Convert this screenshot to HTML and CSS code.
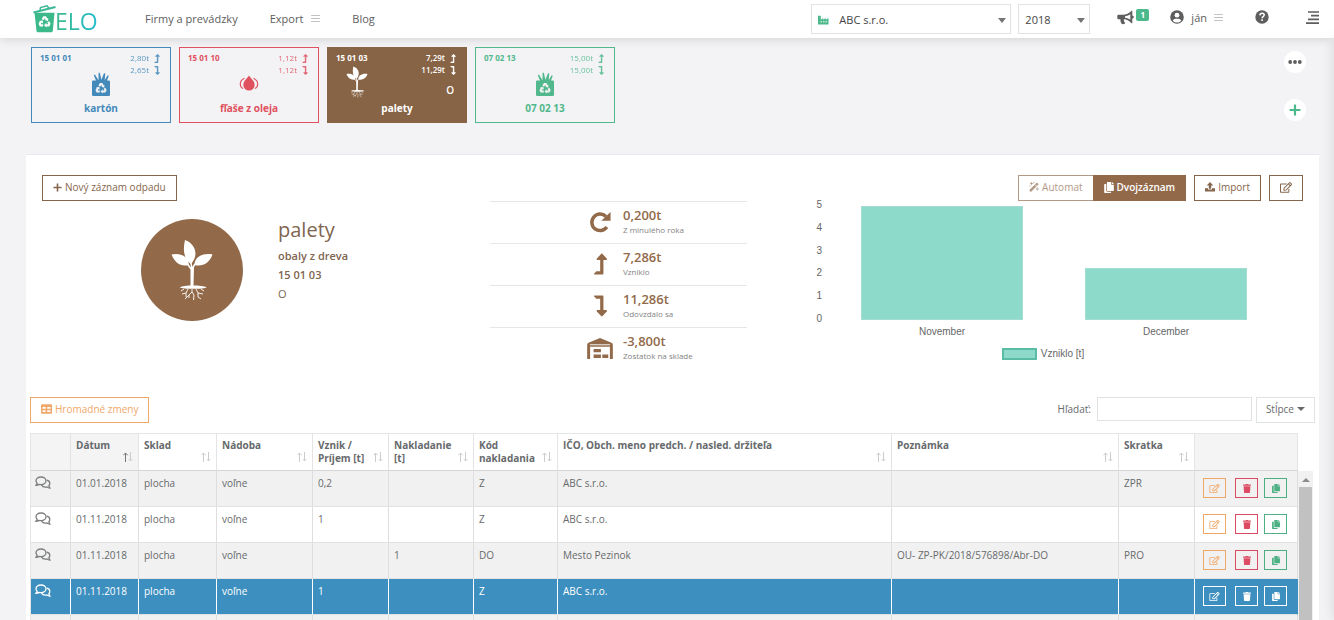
FILE: index.html
```html
<!DOCTYPE html>
<html lang="sk">
<head>
  <meta charset="UTF-8">
  <meta name="viewport" content="width=device-width, initial-scale=1.0">
  <title>ELO - palety</title>
  <link rel="stylesheet" href="styles.css">
</head>
<body>
  <!-- icons -->
  <svg class="sprite" aria-hidden="true">
    <symbol id="i-recycle" viewBox="0 0 24 24">
      <path d="M8.5 8.5L11 4.200h2.500l2.700 4.500M19 12.500l2 3.800-1.500 2.700h-5M9.500 19H4.600L3.200 16.300l2.600-4.600" fill="none" stroke="currentColor" stroke-width="4"/>
      <path d="M18.700 5.500v6.200l-6-2.400zM15.500 14.500v8.500l-4.500-4.200zM2 11.500l6.500-1.800 1.200 6z" fill="currentColor"/>
    </symbol>
    <symbol id="i-bag" viewBox="0 0 18 24">
      <path d="M1.200 8.500H4L1.800 3.200 2.900 2.600 6.500 8.300 6.600.8h1.200l1.600 7L12 1.200l1.300.3-.6 6.500 3-4.800 1.100.5-1.800 4.800h1.800q1.200 0 1.200 1.200v13a1.300 1.300 0 0 1-1.300 1.300H1.300A1.300 1.300 0 0 1 0 22.700v-13q0-1.200 1.200-1.200z" fill="currentColor"/>
    </symbol>
    <symbol id="i-drops" viewBox="0 0 20 18">
      <path d="M10 .5c1.500 3 6 5.500 6 10a6 6 0 0 1-12 0c0-4.500 4.500-7 6-10z" fill="currentColor"/>
      <path d="M5.200 3.500C3 4.500.8 6.500.8 9.500c0 2.300 1 4 3 4.800M14.800 3.500c2.200 1 4.400 3 4.400 6 0 2.300-1 4-3 4.800" fill="none" stroke="currentColor" stroke-width="1.200"/>
    </symbol>
    <symbol id="i-plant" viewBox="0 0 42 62">
      <path d="M20 25C12 20 12 9 14 1c9 3 15 14 6 24zM18 26C10 28 4 24 .5 15.500 9 13.500 17 17 18 26zM23.500 26c0-8 8-12.500 18-10.500-3 8.500-10 12.500-18 10.500z" fill="currentColor"/>
      <path d="M20 24l1 6 3-5M16.500 25l3.500 5" fill="none" stroke="currentColor" stroke-width="1.500"/>
      <path d="M19.500 28h3.500l-.5 18.500h1.500c6 .3 11 .8 11.500 2-2 1.800-24 1.800-26.500 0 .5-1.200 5-1.700 10.500-2z" fill="currentColor"/>
      <path d="M21 50v3l2 3-.5 5M21 53l-3 3v3M17 50l-2 4-4 1M15 54v4M25 50l2 4 5 1M27 54v4l3 2M13 50l-3 2M30 50l3 2M18 56l-4 4" fill="none" stroke="currentColor" stroke-width=".9"/>
    </symbol>
    <symbol id="i-up" viewBox="0 0 320 512">
      <path d="M313.553 119.669L209.587 7.666c-9.485-10.214-25.676-10.229-35.174 0L70.438 119.669C56.232 134.969 67.062 160 88.025 160H152v272H68.024a11.996 11.996 0 0 0-8.485 3.515l-56 56C-4.021 499.074 1.333 512 12.024 512H208c13.255 0 24-10.745 24-24V160h63.966c20.878 0 31.851-24.969 17.587-40.331z" fill="currentColor"/>
    </symbol>
    <symbol id="i-down" viewBox="0 0 320 512">
      <path d="M313.553 392.331L209.587 504.334c-9.485 10.214-25.676 10.229-35.174 0L70.438 392.331C56.232 377.031 67.062 352 88.025 352H152V80H68.024a11.996 11.996 0 0 1-8.485-3.515l-56-56C-4.021 12.926 1.333 0 12.024 0H208c13.255 0 24 10.745 24 24v328h63.966c20.878 0 31.851 24.969 17.587 40.331z" fill="currentColor"/>
    </symbol>
    <symbol id="i-redo" viewBox="0 0 24 24">
      <path d="M19.500 17.500A9 9 0 1 1 18.500 6" fill="none" stroke="currentColor" stroke-width="3.800"/>
      <path d="M23.500 1v9.500H13.500z" fill="currentColor"/>
    </symbol>
    <symbol id="i-warehouse" viewBox="0 0 28 24">
      <path d="M0 24V8.500Q0 7 1.500 6.300L14 1l12.500 5.300Q28 7 28 8.500V24h-3.200V10.500H3.200V24zM7 13h8v3.500H7zM7 19h8v4H7zM16.500 19H23v4h-6.500z" fill="currentColor"/>
      <path d="M3 8.500h22" stroke="#fff" stroke-width="1"/>
    </symbol>
    <symbol id="i-trash" viewBox="0 0 448 512">
      <path d="M432 32H312l-9.400-18.700A24 24 0 0 0 281.100 0H166.800a23.720 23.720 0 0 0-21.400 13.300L136 32H16A16 16 0 0 0 0 48v32a16 16 0 0 0 16 16h416a16 16 0 0 0 16-16V48a16 16 0 0 0-16-16zM53.200 467a48 48 0 0 0 47.900 45h245.800a48 48 0 0 0 47.900-45L416 128H32z" fill="currentColor"/>
    </symbol>
    <symbol id="i-copy" viewBox="0 0 448 512">
      <path d="M320 448v40c0 13.255-10.745 24-24 24H24c-13.255 0-24-10.745-24-24V120c0-13.255 10.745-24 24-24h72v296c0 30.879 25.121 56 56 56h168zm0-344V0H152c-13.255 0-24 10.745-24 24v368c0 13.255 10.745 24 24 24h272c13.255 0 24-10.745 24-24V128H344c-13.200 0-24-10.800-24-24zm120.971-31.029L375.029 7.029A24 24 0 0 0 358.059 0H352v96h96v-6.059a24 24 0 0 0-7.029-16.970z" fill="currentColor"/>
    </symbol>
    <symbol id="i-edit" viewBox="0 0 576 512">
      <path d="M402.300 344.900l32-32c5-5 13.700-1.500 13.700 5.700V464c0 26.500-21.500 48-48 48H48c-26.500 0-48-21.500-48-48V112c0-26.500 21.500-48 48-48h273.500c7.100 0 10.700 8.600 5.700 13.700l-32 32c-1.500 1.500-3.500 2.300-5.700 2.300H48v352h352V350.500c0-2.100.8-4.100 2.300-5.600zm156.600-201.800L296.300 405.700l-90.400 10c-26.200 2.900-48.500-19.200-45.600-45.600l10-90.400L432.900 17.100c22.900-22.900 59.900-22.900 82.700 0l43.200 43.200c22.900 22.900 22.900 60 .1 82.800zM460.100 174L402 115.900 216.200 301.800l-7.300 65.300 65.300-7.300L460.100 174zm64.800-79.700l-43.200-43.200c-4.100-4.100-10.800-4.100-14.800 0L436 82l58.100 58.100 30.900-30.900c4-4.200 4-10.800-.1-14.900z" fill="currentColor"/>
    </symbol>
    <symbol id="i-comments" viewBox="0 0 16 14">
      <path d="M6 1C3.200 1 1 2.600 1 4.800c0 1 .4 1.800 1.100 2.500L1 9.300c1.400 0 2.300-.4 3-.9.600.2 1.300.2 2 .2 2.800 0 5-1.600 5-3.800S8.800 1 6 1z" fill="none" stroke="currentColor" stroke-width="1.300"/>
      <path d="M11.800 4.200c1.800.4 3 1.600 3 3.200 0 .9-.4 1.700-1 2.300l1.100 2.300c-1.400 0-2.400-.5-3-1-2.300.5-4.400-.2-5.300-1.900" fill="none" stroke="currentColor" stroke-width="1.300"/>
    </symbol>
    <symbol id="i-sort" viewBox="0 0 10 10">
      <path d="M2.500 10V1M.3 3.300L2.500 1l2.200 2.300" fill="none" stroke="currentColor"/>
      <path d="M7.500 0v9M5.800 7.200L7.500 9l1.700-1.800" fill="none" stroke="#ccc"/>
    </symbol>
    <symbol id="i-bars" viewBox="0 0 10 8">
      <path d="M0 .5h10M0 4h10M0 7.500h10" stroke="currentColor" stroke-width="1"/>
    </symbol>
    <symbol id="i-plus" viewBox="0 0 10 10">
      <path d="M5 .5v9M.5 5h9" stroke="currentColor" stroke-width="1.800"/>
    </symbol>
  </svg>

  <header class="topbar">
    <a class="logo" href="#">
      <svg width="24" height="28" viewBox="0 0 24 28">
        <path d="M.5 7.500L22.500 2" stroke="#3cb795" stroke-width="2"/>
        <path d="M7 5.500L7.500 2.500l6.500-1.700 2 2.500" fill="none" stroke="#3cb795" stroke-width="1.500"/>
        <path d="M1.500 7.800h20l-1.700 18.200a1.500 1.500 0 0 1-1.500 1.300H5a1.500 1.500 0 0 1-1.500-1.300z" fill="#3cb98a"/>
        <use href="#i-recycle" x="5" y="10" width="13" height="13" color="#fff"/>
      </svg>
      <span>ELO</span>
    </a>
    <nav class="nav">
      <a href="#">Firmy a prevádzky</a>
      <a href="#">Export <svg class="bars" width="9" height="7"><use href="#i-bars"/></svg></a>
      <a href="#">Blog</a>
    </nav>
    <div class="select-wrap company">
      <svg class="factory" width="11" height="10" viewBox="0 0 11 10"><path d="M0 9.500V.8h2.800v4L5.200 3v1.800L7.800 3v1.800L10.500 3v6.500z" fill="#4cb98d"/><path d="M2.500 6.800h6.500" stroke="#fff" stroke-width="1" stroke-dasharray="1.500 1"/></svg>
      <select aria-label="Firma"><option>ABC s.r.o.</option></select>
    </div>
    <div class="select-wrap year">
      <select aria-label="Rok"><option>2018</option></select>
    </div>
    <div class="topbar-icons">
      <a class="news" href="#" aria-label="Novinky">
        <svg width="17" height="15" viewBox="0 0 17 15"><path d="M1.500 4.800H6C9 4.800 12 3.500 14.500.8h.8v4.700a1.500 1.500 0 0 1 0 3v4.700h-.8C12 10.700 9.500 9.500 7 9.300c-.4 1.700.2 2.700 1.200 3.700-.3 1.300-3 1.500-3.800.5C3.600 12 3.200 10.700 3.500 9.300h-2Q.3 9.300.3 8V6q0-1.200 1.200-1.200z" fill="currentColor"/><path d="M8 6.300c2.200-.3 3.800-1 5.300-2.100v5.600C11.800 8.800 10.200 8.100 8 7.800z" fill="#fff"/></svg>
        <span class="badge">1</span>
      </a>
      <a class="user" href="#">
        <svg width="14" height="14" viewBox="0 0 14 14"><circle cx="7" cy="7" r="6.800" fill="currentColor"/><circle cx="7" cy="5.200" r="2.400" fill="#fff"/><path d="M2.700 10.700C3.500 9 5 8.800 7 8.800s3.500.2 4.300 1.900a5.800 5.800 0 0 1-8.600 0z" fill="#fff"/></svg>
        <span>ján</span>
        <svg class="bars" width="9" height="7"><use href="#i-bars"/></svg>
      </a>
      <a class="help" href="#" aria-label="Pomoc">
        <svg width="14" height="14" viewBox="0 0 14 14"><circle cx="7" cy="7" r="6.700" fill="currentColor"/><path d="M4.900 5.400C5 4 6 3.300 7.100 3.300c1.200 0 2.100.8 2.100 1.800 0 1.500-2.100 1.500-2.100 3.200M7.100 9.300v1.700" fill="none" stroke="#fff" stroke-width="1.500"/></svg>
      </a>
      <a class="side-toggle" href="#" aria-label="Menu">
        <svg width="13" height="13" viewBox="0 0 13 13"><path d="M2 1h11M5 4.700h8M2 8.400h11M0 12.100h13" stroke="currentColor" stroke-width="1.700"/></svg>
      </a>
    </div>
  </header>

  <main>
    <section class="waste-bar">
      <div class="card blue">
        <div class="card-top">
          <div class="card-code">15 01 01</div>
          <svg class="card-icon" width="18" height="24"><use href="#i-bag"/><use href="#i-recycle" x="3" y="10" width="12" height="12" color="#f3f3f4"/></svg>
          <div class="amounts">
            <div>2,80t <svg width="6" height="9"><use href="#i-up"/></svg></div>
            <div>2,65t <svg width="6" height="9"><use href="#i-down"/></svg></div>
          </div>
        </div>
        <div class="card-name">kartón</div>
      </div>
      <div class="card red">
        <div class="card-top">
          <div class="card-code">15 01 10</div>
          <svg class="card-icon drops" width="20" height="17"><use href="#i-drops"/></svg>
          <div class="amounts">
            <div>1,12t <svg width="6" height="9"><use href="#i-up"/></svg></div>
            <div>1,12t <svg width="6" height="9"><use href="#i-down"/></svg></div>
          </div>
        </div>
        <div class="card-name">fľaše z oleja</div>
      </div>
      <div class="card active">
        <div class="card-top">
          <div class="card-code">
            15 01 03
            <svg class="plant" width="22" height="32"><use href="#i-plant"/></svg>
          </div>
          <div class="amounts">
            <div>7,29t <svg width="6" height="9"><use href="#i-up"/></svg></div>
            <div>11,29t <svg width="6" height="9"><use href="#i-down"/></svg></div>
            <div class="category">O</div>
          </div>
        </div>
        <div class="card-name">palety</div>
      </div>
      <div class="card green">
        <div class="card-top">
          <div class="card-code">07 02 13</div>
          <svg class="card-icon" width="18" height="24"><use href="#i-bag"/><use href="#i-recycle" x="3" y="10" width="12" height="12" color="#f3f3f4"/></svg>
          <div class="amounts">
            <div>15,00t <svg width="6" height="9"><use href="#i-up"/></svg></div>
            <div>15,00t <svg width="6" height="9"><use href="#i-down"/></svg></div>
          </div>
        </div>
        <div class="card-name">07 02 13</div>
      </div>
      <div class="round-buttons">
        <button type="button" aria-label="Viac"><svg width="14" height="4" viewBox="0 0 14 4"><circle cx="2.200" cy="2" r="1.900"/><circle cx="7" cy="2" r="1.900"/><circle cx="11.800" cy="2" r="1.900"/></svg></button>
        <button type="button" class="add" aria-label="Pridať"><svg width="12" height="12"><use href="#i-plus"/></svg></button>
      </div>
    </section>

    <section class="panel">
      <div class="toolbar">
        <button type="button" class="btn brown"><svg width="9" height="9"><use href="#i-plus"/></svg> Nový záznam odpadu</button>
        <div class="toolbar-right">
          <div class="btn-group">
            <button type="button" class="btn brown faded"><svg width="10" height="10" viewBox="0 0 10 10"><path d="M1 9.200L8.800 1.400" stroke="currentColor" stroke-width="2.400"/><path d="M6 2.600l1.600 1.600" stroke="#fff" stroke-width=".8"/><path d="M2.500 0v3M1 1.500h3M4.800 0v1.200M8.300 5.500v3M6.800 7h3M.3 3.800h1.200" stroke="currentColor" stroke-width=".8"/></svg> Automat</button>
            <button type="button" class="btn brown filled"><svg width="10" height="11"><use href="#i-copy"/></svg> Dvojzáznam</button>
          </div>
          <button type="button" class="btn brown"><svg width="10" height="10" viewBox="0 0 10 10"><path d="M5 0l3.300 3.600H6.200v3.100H3.800V3.600H1.700zM0 6.300h3v1.200h4V6.300h3V9.500H0z" fill="currentColor"/></svg> Import</button>
          <button type="button" class="btn brown" aria-label="Upraviť"><svg width="12" height="11"><use href="#i-edit"/></svg></button>
        </div>
      </div>

      <div class="summary">
        <div class="waste">
          <div class="waste-icon"><svg width="42" height="62"><use href="#i-plant"/></svg></div>
          <div class="waste-text">
            <h1>palety</h1>
            <p>obaly z dreva</p>
            <p>15 01 03</p>
            <p class="light">O</p>
          </div>
        </div>

        <ul class="stats">
          <li>
            <svg width="22" height="22"><use href="#i-redo"/></svg>
            <div><strong>0,200t</strong><small>Z minulého roka</small></div>
          </li>
          <li>
            <svg width="13" height="22"><use href="#i-up"/></svg>
            <div><strong>7,286t</strong><small>Vzniklo</small></div>
          </li>
          <li>
            <svg width="13" height="22"><use href="#i-down"/></svg>
            <div><strong>11,286t</strong><small>Odovzdalo sa</small></div>
          </li>
          <li>
            <svg width="26" height="22"><use href="#i-warehouse"/></svg>
            <div><strong>-3,800t</strong><small>Zostatok na sklade</small></div>
          </li>
        </ul>

        <div class="chart">
          <div class="chart-body">
            <div class="axis"><span>5</span><span>4</span><span>3</span><span>2</span><span>1</span><span>0</span></div>
            <div class="bars-area">
              <div class="bar" style="height: 100%"></div>
              <div class="bar" style="height: 46%"></div>
            </div>
          </div>
          <div class="months"><span>November</span><span>December</span></div>
          <div class="legend"><i></i>Vzniklo [t]</div>
        </div>
      </div>

      <div class="records">
        <div class="records-bar">
          <button type="button" class="btn orange"><svg width="11" height="10" viewBox="0 0 11 10"><path d="M1 .3h9a1 1 0 0 1 1 1v7.400a1 1 0 0 1-1 1H1a1 1 0 0 1-1-1V1.300a1 1 0 0 1 1-1zM1.500 3v1.700h3.200V3zm4.700 0v1.700h3.300V3zM1.500 6.200v1.900h3.200V6.200zm4.700 0v1.900h3.300V6.200z" fill="currentColor" fill-rule="evenodd"/></svg> Hromadné zmeny</button>
          <label class="search-label" for="search">Hľadať:</label>
          <input type="search" id="search">
          <button type="button" class="btn columns">Stĺpce <span class="caret"></span></button>
        </div>

        <div class="table-wrap">
          <table>
            <colgroup>
              <col class="c-chat"><col class="c-date"><col class="c-store"><col class="c-bin"><col class="c-in"><col class="c-out"><col class="c-code"><col><col class="c-note"><col class="c-short"><col class="c-actions">
            </colgroup>
            <thead>
              <tr>
                <th class="gray"></th>
                <th class="gray sorted"><div>Dátum <svg width="10" height="10"><use href="#i-sort"/></svg></div></th>
                <th><div>Sklad <svg width="10" height="10"><use href="#i-sort"/></svg></div></th>
                <th><div>Nádoba <svg width="10" height="10"><use href="#i-sort"/></svg></div></th>
                <th><div>Vznik / Príjem [t] <svg width="10" height="10"><use href="#i-sort"/></svg></div></th>
                <th><div>Nakladanie [t] <svg width="10" height="10"><use href="#i-sort"/></svg></div></th>
                <th><div>Kód nakladania <svg width="10" height="10"><use href="#i-sort"/></svg></div></th>
                <th><div>IČO, Obch. meno predch. / nasled. držiteľa <svg width="10" height="10"><use href="#i-sort"/></svg></div></th>
                <th><div>Poznámka <svg width="10" height="10"><use href="#i-sort"/></svg></div></th>
                <th><div>Skratka <svg width="10" height="10"><use href="#i-sort"/></svg></div></th>
                <th class="gray"></th>
              </tr>
            </thead>
            <tbody>
              <tr>
                <td class="chat"><svg width="16" height="14"><use href="#i-comments"/></svg></td>
                <td>01.01.2018</td><td>plocha</td><td>voľne</td><td>0,2</td><td></td><td>Z</td><td>ABC s.r.o.</td><td></td><td>ZPR</td>
                <td class="actions"><div>
                  <button type="button" class="edit" aria-label="Upraviť"><svg width="11" height="9"><use href="#i-edit"/></svg></button>
                  <button type="button" class="delete" aria-label="Zmazať"><svg width="8" height="9"><use href="#i-trash"/></svg></button>
                  <button type="button" class="copy" aria-label="Kopírovať"><svg width="8" height="9"><use href="#i-copy"/></svg></button>
                </div></td>
              </tr>
              <tr>
                <td class="chat"><svg width="16" height="14"><use href="#i-comments"/></svg></td>
                <td>01.11.2018</td><td>plocha</td><td>voľne</td><td>1</td><td></td><td>Z</td><td>ABC s.r.o.</td><td></td><td></td>
                <td class="actions"><div>
                  <button type="button" class="edit" aria-label="Upraviť"><svg width="11" height="9"><use href="#i-edit"/></svg></button>
                  <button type="button" class="delete" aria-label="Zmazať"><svg width="8" height="9"><use href="#i-trash"/></svg></button>
                  <button type="button" class="copy" aria-label="Kopírovať"><svg width="8" height="9"><use href="#i-copy"/></svg></button>
                </div></td>
              </tr>
              <tr>
                <td class="chat"><svg width="16" height="14"><use href="#i-comments"/></svg></td>
                <td>01.11.2018</td><td>plocha</td><td>voľne</td><td></td><td>1</td><td>DO</td><td>Mesto Pezinok</td><td>OU- ZP-PK/2018/576898/Abr-DO</td><td>PRO</td>
                <td class="actions"><div>
                  <button type="button" class="edit" aria-label="Upraviť"><svg width="11" height="9"><use href="#i-edit"/></svg></button>
                  <button type="button" class="delete" aria-label="Zmazať"><svg width="8" height="9"><use href="#i-trash"/></svg></button>
                  <button type="button" class="copy" aria-label="Kopírovať"><svg width="8" height="9"><use href="#i-copy"/></svg></button>
                </div></td>
              </tr>
              <tr class="selected">
                <td class="chat"><svg width="16" height="14"><use href="#i-comments"/></svg></td>
                <td>01.11.2018</td><td>plocha</td><td>voľne</td><td>1</td><td></td><td>Z</td><td>ABC s.r.o.</td><td></td><td></td>
                <td class="actions"><div>
                  <button type="button" class="edit" aria-label="Upraviť"><svg width="11" height="9"><use href="#i-edit"/></svg></button>
                  <button type="button" class="delete" aria-label="Zmazať"><svg width="8" height="9"><use href="#i-trash"/></svg></button>
                  <button type="button" class="copy" aria-label="Kopírovať"><svg width="8" height="9"><use href="#i-copy"/></svg></button>
                </div></td>
              </tr>
              <tr><td></td><td></td><td></td><td></td><td></td><td></td><td></td><td></td><td></td><td></td><td></td></tr>
            </tbody>
          </table>
          <div class="scrollbar"><span class="scroll-up"></span><span class="thumb"></span></div>
        </div>
      </div>
    </section>
  </main>
  <aside class="right-sidebar"></aside>
</body>
</html>
```
FILE: styles.css
```css
* {
  box-sizing: border-box;
}
body {
  margin: 0;
  height: 100vh;
  overflow: hidden;
  display: flex;
  flex-direction: column;
  background: #f3f3f5;
  color: #676a6c;
  font-family: "Open Sans", sans-serif;
  font-size: 10px;
  line-height: 13px;
}
a {
  color: inherit;
  text-decoration: none;
}
svg {
  display: block;
  flex: none;
}
button,
input,
select {
  font-family: inherit;
  font-size: 10px;
  color: inherit;
}
button {
  cursor: pointer;
}
.sprite {
  position: absolute;
  width: 0;
  height: 0;
}

/* top bar */
.topbar {
  flex: none;
  display: flex;
  align-items: center;
  height: 38px;
  padding: 0 15px 0 33px;
  background: #fff;
  color: #5e5e5e;
  font-size: 11px;
  box-shadow: 0 0 12px rgba(0, 0, 0, 0.16);
}
.logo {
  display: flex;
  align-items: center;
  width: 112px;
}
.logo span {
  margin-left: -2px;
  font-size: 23px;
  line-height: 24px;
  padding-top: 4px;
  background: linear-gradient(90deg, #3cb98a, #25bcd0);
  -webkit-background-clip: text;
  background-clip: text;
  color: transparent;
}
.nav {
  display: flex;
  gap: 32px;
  margin-right: auto;
  padding-bottom: 2px;
  font-weight: 500;
}
.nav a {
  display: flex;
  align-items: center;
  gap: 8px;
}
.bars {
  color: #b5b5b5;
}
.select-wrap {
  position: relative;
  height: 30px;
  margin-right: 7px;
}
.select-wrap::after {
  content: "";
  position: absolute;
  right: 5px;
  top: 14px;
  border: 4px solid transparent;
  border-top: 5px solid #757575;
  border-bottom: 0;
  pointer-events: none;
}
.select-wrap select {
  width: 100%;
  height: 30px;
  padding: 0 6px;
  border: 1px solid #e0e3e4;
  border-radius: 0;
  background: #fff;
  color: #444;
  font-size: 11px;
  appearance: none;
}
.company {
  width: 200px;
}
.company select {
  padding-left: 27px;
}
.year {
  width: 72px;
}
.factory {
  position: absolute;
  left: 7px;
  top: 11px;
}
.topbar-icons {
  display: flex;
  align-items: center;
  padding: 0 0 4px 20px;
}
.news,
.user {
  display: flex;
  align-items: center;
}
.badge {
  margin: 0 0 5px 2px;
  width: 13px;
  border-radius: 2px;
  background: #4cb98d;
  color: #fff;
  font-size: 8px;
  font-weight: 700;
  line-height: 12px;
  text-align: center;
}
.user {
  gap: 7px;
  margin: 0 32px 0 21px;
}
.help {
  margin-right: 37px;
}

/* waste cards */
main {
  flex: 1;
  min-height: 0;
  display: flex;
  flex-direction: column;
  padding: 9px 15px 0 26px;
}
.waste-bar {
  display: flex;
  gap: 8px;
  padding: 0 13px 0 5px;
  margin-bottom: 31px;
}
.card {
  width: 140px;
  height: 76px;
  padding: 4px 8px;
  border: 1px solid currentColor;
  font-size: 8px;
}
.card.blue {
  color: #4389ba;
}
.card.red {
  color: #e0515f;
}
.card.green {
  color: #50b88c;
}
.card.active {
  background: #886446;
  border-color: #886446;
  color: #fff;
}
.card-top {
  display: grid;
  grid-template-columns: 1fr auto 1fr;
  height: 44px;
  margin-bottom: 5px;
  line-height: 12px;
}
.card.active .card-top {
  grid-template-columns: 1fr 1fr;
}
.card-code {
  font-weight: 700;
}
.card-icon {
  align-self: end;
}
.drops {
  margin-bottom: 4px;
}
.plant {
  margin: 2px 0 0 10px;
}
.amounts {
  justify-self: end;
}
.amounts div {
  display: flex;
  align-items: center;
  justify-content: flex-end;
  gap: 5px;
  padding-right: 2px;
  white-space: nowrap;
  opacity: 0.85;
}
.active .amounts div {
  font-weight: 600;
  opacity: 1;
}
.amounts .category {
  padding: 8px 4px 0 0;
  font-size: 10px;
}
.card-name {
  font-size: 10px;
  font-weight: 700;
  line-height: 14px;
  text-align: center;
}
.round-buttons {
  display: flex;
  flex-direction: column;
  gap: 26px;
  margin-left: auto;
  padding-top: 4px;
}
.round-buttons button {
  display: flex;
  align-items: center;
  justify-content: center;
  width: 22px;
  height: 22px;
  padding: 0;
  border: 0;
  border-radius: 50%;
  background: #fff;
  color: #5e5e5e;
  fill: currentColor;
}
.round-buttons .add {
  color: #4cb98d;
}

/* panel */
.panel {
  flex: 1;
  min-height: 0;
  overflow: hidden;
  padding-top: 20px;
  border-top: 1px solid #e7eaec;
  background: #fff;
}
.toolbar {
  display: flex;
  justify-content: space-between;
  padding: 0 16px;
}
.toolbar-right {
  display: flex;
  gap: 8px;
}
.btn-group {
  display: flex;
}
.btn {
  display: flex;
  align-items: center;
  gap: 3px;
  height: 26px;
  padding: 0 10px 2px;
  border: 1px solid currentColor;
  background: #fff;
}
.btn.brown {
  color: #85664d;
}
.btn.faded {
  color: #b39a86;
  border-right: 0;
}
.btn.filled {
  border-color: #926a4a;
  background: #926a4a;
  color: #fff;
  font-weight: 600;
}
.btn.orange {
  color: #f0a868;
  margin-right: auto;
}

.summary {
  display: grid;
  grid-template-columns: 448fr 257fr 556fr;
  padding: 0 16px;
  margin-bottom: 28px;
}
.waste {
  display: flex;
  align-items: flex-start;
  gap: 35px;
  padding: 15px 0 0 99px;
  color: #80654f;
}
.waste-icon {
  display: flex;
  align-items: center;
  justify-content: center;
  width: 102px;
  height: 102px;
  margin-top: 3px;
  border-radius: 50%;
  background: #926a4a;
  color: #fff;
}
.waste h1 {
  margin: 0 0 2px;
  font-size: 20px;
  font-weight: 400;
  line-height: 28px;
}
.waste p {
  margin: 0;
  font-size: 11px;
  font-weight: 600;
  line-height: 19px;
}
.waste .light {
  font-weight: 400;
}
.stats {
  list-style: none;
  margin: 0;
  padding: 0;
}
.stats li {
  display: grid;
  grid-template-columns: 28px auto;
  align-items: center;
  justify-items: center;
  justify-content: start;
  gap: 9px;
  padding: 5px 0 6px 96px;
  border-top: 1px solid #e7e7e7;
  color: #926a4a;
}
.stats li div {
  justify-self: start;
}
.stats strong {
  display: block;
  font-size: 13px;
  font-weight: 600;
  line-height: 16px;
}
.stats small {
  display: block;
  color: #838383;
  font-size: 8px;
  line-height: 14px;
}

/* chart */
.chart {
  padding: 5px 25px 0 61px;
  color: #666;
  font-family: "Liberation Sans", Arial, sans-serif;
  font-size: 10px;
  line-height: 12px;
}
.chart-body {
  display: flex;
  height: 114px;
}
.axis {
  display: flex;
  flex-direction: column;
  justify-content: space-between;
  width: 22px;
  margin: -6px 0 -4px;
  padding-right: 8px;
  line-height: 10px;
  text-align: right;
}
.bars-area {
  flex: 1;
  display: flex;
  align-items: flex-end;
  justify-content: space-around;
}
.bar {
  width: 36%;
  background: #8dd9ca;
  border: 1px solid #a3dcd0;
}
.months {
  display: flex;
  padding: 6px 0 0 22px;
}
.months span {
  flex: 1;
  text-align: center;
}
.legend {
  display: flex;
  justify-content: center;
  gap: 4px;
  margin-top: 10px;
}
.legend i {
  width: 35px;
  border: 2px solid #5bbca6;
  background: #8dd9ca;
}

/* records table */
.records {
  padding: 0 4px;
}
.records-bar {
  display: flex;
  align-items: flex-start;
  margin-bottom: 10px;
}
.search-label {
  margin-right: 6px;
  line-height: 25px;
}
#search {
  width: 155px;
  height: 24px;
  margin-right: 4px;
  padding: 0 6px;
  border: 1px solid #e0e3e4;
}
.btn.columns {
  padding: 0 9px 2px;
  border-color: #e0e3e4;
}
.caret {
  border: 4px solid transparent;
  border-top-color: currentColor;
  border-bottom: 0;
}
.table-wrap {
  display: flex;
}
table {
  flex: 1;
  width: 100%;
  table-layout: fixed;
  border-collapse: separate;
  border-spacing: 0;
  border-left: 1px solid #e4e4e4;
}
.c-chat { width: 40px; }
.c-date { width: 68px; }
.c-store { width: 78px; }
.c-bin { width: 96px; }
.c-in { width: 76px; }
.c-out { width: 85px; }
.c-code { width: 84px; }
.c-note { width: 227px; }
.c-short { width: 76px; }
.c-actions { width: 103px; }
th {
  height: 38px;
  padding: 5px;
  border-top: 1px solid #e4e7e8;
  border-right: 1px solid #e4e4e4;
  border-bottom: 1px solid #d5d5d5;
  text-align: left;
  vertical-align: top;
  font-weight: 700;
}
th div {
  display: flex;
  justify-content: space-between;
  height: 26px;
}
th svg {
  align-self: flex-end;
  margin-bottom: 3px;
  color: #ccc;
}
th.gray {
  background: #f4f4f5;
}
th.sorted svg {
  color: #777;
}
td {
  height: 36px;
  padding: 6px 5px;
  border-right: 1px solid #dedede;
  border-bottom: 1px solid #e2e2e2;
  vertical-align: top;
}
td.chat {
  padding: 5px 4px;
  color: #7b7d7f;
}
tbody tr:nth-child(odd) {
  background: #f1f1f1;
}
td.actions {
  padding: 7px 8px 0;
}
.actions div {
  display: flex;
}
.actions button {
  display: flex;
  align-items: center;
  justify-content: center;
  width: 23px;
  height: 20px;
  padding: 0;
  border: 1px solid currentColor;
  background: none;
}
.actions .edit {
  margin-right: 9px;
  color: #f0a868;
}
.actions .delete {
  margin-right: 6px;
  color: #dc4a63;
}
.actions .copy {
  color: #4cb083;
}
tbody .selected {
  background: #3d8fbf;
}
.selected td {
  border-right-color: #fff;
  color: #fff;
}
.selected td:last-child {
  border-right-color: #3d8fbf;
}
.selected .actions button {
  color: #fff;
}
.scrollbar {
  display: flex;
  flex-direction: column;
  align-items: center;
  width: 15px;
  margin: 38px 2px 0 0;
  background: #f1f1f1;
}
.scroll-up {
  margin: 7px 0 5px;
  border: 4px solid transparent;
  border-bottom-color: #8c8c8c;
  border-top: 0;
}
.thumb {
  flex: 1;
  width: 13px;
  background: #c1c1c1;
}

/* collapsed sidebar, only its shadow is visible */
.right-sidebar {
  position: fixed;
  top: 38px;
  bottom: 0;
  left: 100%;
  width: 200px;
  box-shadow: 0 0 12px rgba(0, 0, 0, 0.12);
}
```
